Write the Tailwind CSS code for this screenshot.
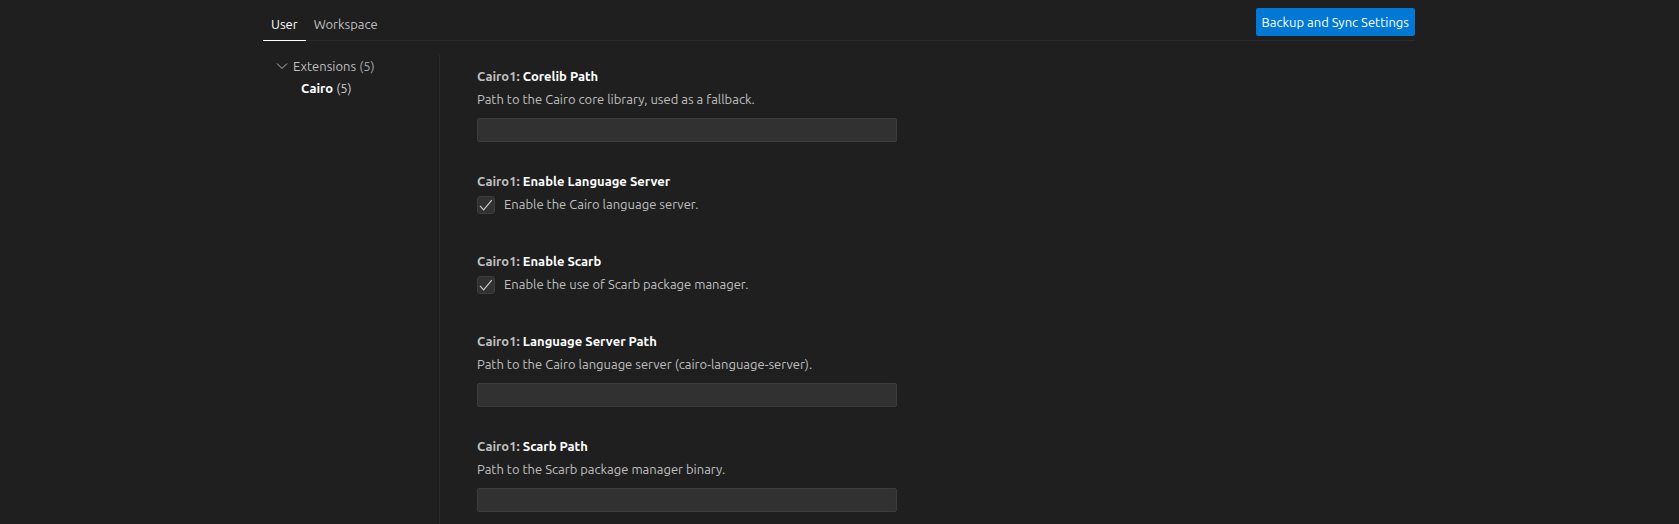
<!DOCTYPE html>
<html lang="en">
<head>
<meta charset="utf-8">
<title>Settings</title>
<script src="https://cdn.jsdelivr.net/npm/@tailwindcss/browser@4"></script>
</head>
<body class="min-h-screen bg-[#1f1f1f] font-[Ubuntu,'Open_Sans',sans-serif] text-[13px] leading-[18px] text-[#bfbfbf]">
<div class="mx-auto flex min-h-screen max-w-[1201px] flex-col pr-[25px] pl-6">
  <header class="flex h-[41px] items-end justify-between border-b border-[#2b2b2b]">
    <nav class="-mb-px flex" aria-label="Settings scope">
      <button type="button" class="border-b border-white px-2 pt-2 pb-[7px] text-white">User</button>
      <button type="button" class="border-b border-transparent px-2 pt-2 pb-[7px]">Workspace</button>
    </nav>
    <button type="button" class="mb-1 h-7 rounded-xs bg-[#0078d4] px-[6px] text-white">Backup and Sync Settings</button>
  </header>
  <div class="mt-[14px] flex flex-1">
    <nav class="w-[177px] shrink-0 border-r border-[#2b2b2b] pl-[13px] leading-[22px]" aria-label="Settings groups">
      <a href="#extensions" class="flex items-center gap-[5px]">
        <svg class="size-3" viewBox="0 0 12 12" fill="none" stroke="#b8b8b8" aria-hidden="true"><path d="M1 3.5 6 8.5 11 3.5"/></svg>
        <span>Extensions <span class="text-[#a8a8a8]">(5)</span></span>
      </a>
      <a href="#cairo" class="block pl-[25px] text-[#cccccc]"><b class="text-white">Cairo</b> (5)</a>
    </nav>
    <main class="flex-1 pl-[37px]">
      <section class="pt-3 pb-[18px]">
        <label for="corelib" class="block font-bold">Cairo1: <span class="text-white">Corelib Path</span></label>
        <p class="mt-[5px]">Path to the Cairo core library, used as a fallback.</p>
        <input id="corelib" type="text" class="mt-[10px] block h-6 w-full max-w-[420px] rounded-xs border border-[#3c3c3c] bg-[#313131] px-1">
      </section>
      <section class="pt-3 pb-[26px]">
        <h3 class="font-bold">Cairo1: <span class="text-white">Enable Language Server</span></h3>
        <label class="mt-[6px] flex items-start gap-[9px]">
          <span class="grid size-[18px]">
            <input type="checkbox" checked class="col-start-1 row-start-1 size-[18px] appearance-none rounded-[3px] border border-[#3c3c3c] bg-[#313131]">
            <svg class="pointer-events-none col-start-1 row-start-1 size-[18px]" viewBox="0 0 18 18" fill="none" stroke="#cccccc" stroke-width="1.2" aria-hidden="true"><path d="M3 9.8 6.6 13.8 14.8 4.2"/></svg>
          </span>
          <span class="leading-4">Enable the Cairo language server.</span>
        </label>
      </section>
      <section class="pt-3 pb-[26px]">
        <h3 class="font-bold">Cairo1: <span class="text-white">Enable Scarb</span></h3>
        <label class="mt-[6px] flex items-start gap-[9px]">
          <span class="grid size-[18px]">
            <input type="checkbox" checked class="col-start-1 row-start-1 size-[18px] appearance-none rounded-[3px] border border-[#3c3c3c] bg-[#313131]">
            <svg class="pointer-events-none col-start-1 row-start-1 size-[18px]" viewBox="0 0 18 18" fill="none" stroke="#cccccc" stroke-width="1.2" aria-hidden="true"><path d="M3 9.8 6.6 13.8 14.8 4.2"/></svg>
          </span>
          <span class="leading-4">Enable the use of Scarb package manager.</span>
        </label>
      </section>
      <section class="pt-3 pb-[18px]">
        <label for="server" class="block font-bold">Cairo1: <span class="text-white">Language Server Path</span></label>
        <p class="mt-[5px]">Path to the Cairo language server (cairo-language-server).</p>
        <input id="server" type="text" class="mt-[10px] block h-6 w-full max-w-[420px] rounded-xs border border-[#3c3c3c] bg-[#313131] px-1">
      </section>
      <section class="pt-3">
        <label for="scarb" class="block font-bold">Cairo1: <span class="text-white">Scarb Path</span></label>
        <p class="mt-[5px]">Path to the Scarb package manager binary.</p>
        <input id="scarb" type="text" class="mt-[10px] block h-6 w-full max-w-[420px] rounded-xs border border-[#3c3c3c] bg-[#313131] px-1">
      </section>
    </main>
  </div>
</div>
</body>
</html>
